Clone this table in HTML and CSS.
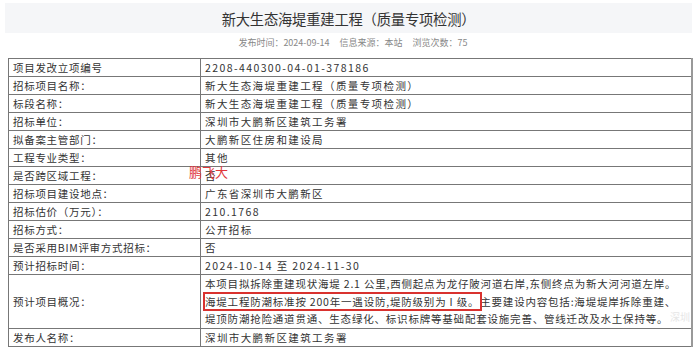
FILE: index.html
```html
<!DOCTYPE html>
<html lang="zh-CN">
<head>
<meta charset="utf-8">
<title>新大生态海堤重建工程（质量专项检测）</title>
<link rel="stylesheet" href="styles.css">
</head>
<body>
<div class="page">
  <div class="title-bar"><h1 class="title">新大生态海堤重建工程（质量专项检测）</h1></div>
  <div class="meta">发布时间：2024-09-14<span class="gap"></span>信息来源：本站<span class="gap"></span>浏览次数：75</div>
  <div class="table-wrap">
    <table class="info">
      <tr><td class="k">项目发改立项编号</td><td class="v">2208-440300-04-01-378186</td></tr>
      <tr><td class="k">招标项目名称：</td><td class="v">新大生态海堤重建工程（质量专项检测）</td></tr>
      <tr><td class="k">标段名称：</td><td class="v">新大生态海堤重建工程（质量专项检测）</td></tr>
      <tr><td class="k">招标单位：</td><td class="v">深圳市大鹏新区建筑工务署</td></tr>
      <tr><td class="k">拟备案主管部门：</td><td class="v">大鹏新区住房和建设局</td></tr>
      <tr><td class="k">工程专业类型：</td><td class="v">其他</td></tr>
      <tr><td class="k">是否跨区域工程：</td><td class="v">否</td></tr>
      <tr><td class="k">招标项目建设地点：</td><td class="v">广东省深圳市大鹏新区</td></tr>
      <tr><td class="k">招标估价（万元）：</td><td class="v">210.1768</td></tr>
      <tr><td class="k">招标方式：</td><td class="v">公开招标</td></tr>
      <tr><td class="k">是否采用BIM评审方式招标：</td><td class="v">否</td></tr>
      <tr><td class="k">预计招标时间：</td><td class="v">2024-10-14 至 2024-11-30</td></tr>
      <tr class="tall"><td class="k">预计项目概况：</td><td class="v desc">
        <span class="line">本项目拟拆除重建现状海堤 2.1 公里,西侧起点为龙仔陂河道右岸,东侧终点为新大河河道左岸。</span>
        <span class="line"><span class="mark">海堤工程防潮标准按 200年一遇设防,堤防级别为 I 级。</span>主要建设内容包括:海堤堤岸拆除重建、</span>
        <span class="line">堤顶防潮抢险通道贯通、生态绿化、标识标牌等基础配套设施完善、管线迁改及水土保持等。</span>
      </td></tr>
      <tr><td class="k">发布人名称：</td><td class="v">深圳市大鹏新区建筑工务署</td></tr>
    </table>
  </div>
  <span class="stamp">鹏飞大</span>
  <span class="wm">深圳</span>
</div>
</body>
</html>
```
FILE: styles.css
```css
* { box-sizing: border-box; }
html, body { margin: 0; padding: 0; background: #fff; }
body {
  width: 700px;
  height: 358px;
  overflow: hidden;
  font-family: "Noto Sans CJK SC", "Noto Sans", sans-serif;
  color: #333;
}
.page { position: relative; padding-top: 3px; }
.title-bar {
  margin: 0 8px 0 5px;
  height: 30px;
  background: #f5f6f8;
  display: flex;
  align-items: center;
  justify-content: center;
}
.title {
  margin: 0;
  font-size: 14.3px;
  font-weight: normal;
  color: #333;
  letter-spacing: -0.2px;
}
.meta {
  height: 18px;
  margin-top: 1px;
  line-height: 18px;
  font-size: 9px;
  color: #888;
  text-align: center;
  padding-left: 6px;
}
.gap { display: inline-block; width: 10px; }
.table-wrap {
  margin: 6px 0 0 8px;
  width: 685px;
}
.info {
  border-collapse: collapse;
  width: 685px;
  table-layout: fixed;
  font-size: 10.5px;
  letter-spacing: 0.7px;
}
.info td {
  border: 1px solid #777;
  height: 18px;
  line-height: 17px;
  padding: 0 0 0 4px;
  white-space: nowrap;
  vertical-align: middle;
}
.info td.k { width: 192px; color: #333; }
.info td.v {
  color: #333;
  padding-left: 4px;
  letter-spacing: 1.4px;
  border-right: 2px solid #999;
}
.info td.desc { letter-spacing: 0.8px; }
.info tr.tall td { height: 54px; }
.line { display: block; line-height: 17.5px; }
.mark {
  outline: 2px solid #d9322f;
  outline-offset: 0px;
  padding: 0 1px 0 0;
}
.stamp {
  position: absolute;
  left: 189px;
  top: 164px;
  font-size: 13px;
  line-height: 16px;
  color: #e0363a;
  letter-spacing: 0;
}
.wm {
  position: absolute;
  left: 670px;
  top: 309px;
  font-size: 10px;
  color: #e6e6e6;
}
```
